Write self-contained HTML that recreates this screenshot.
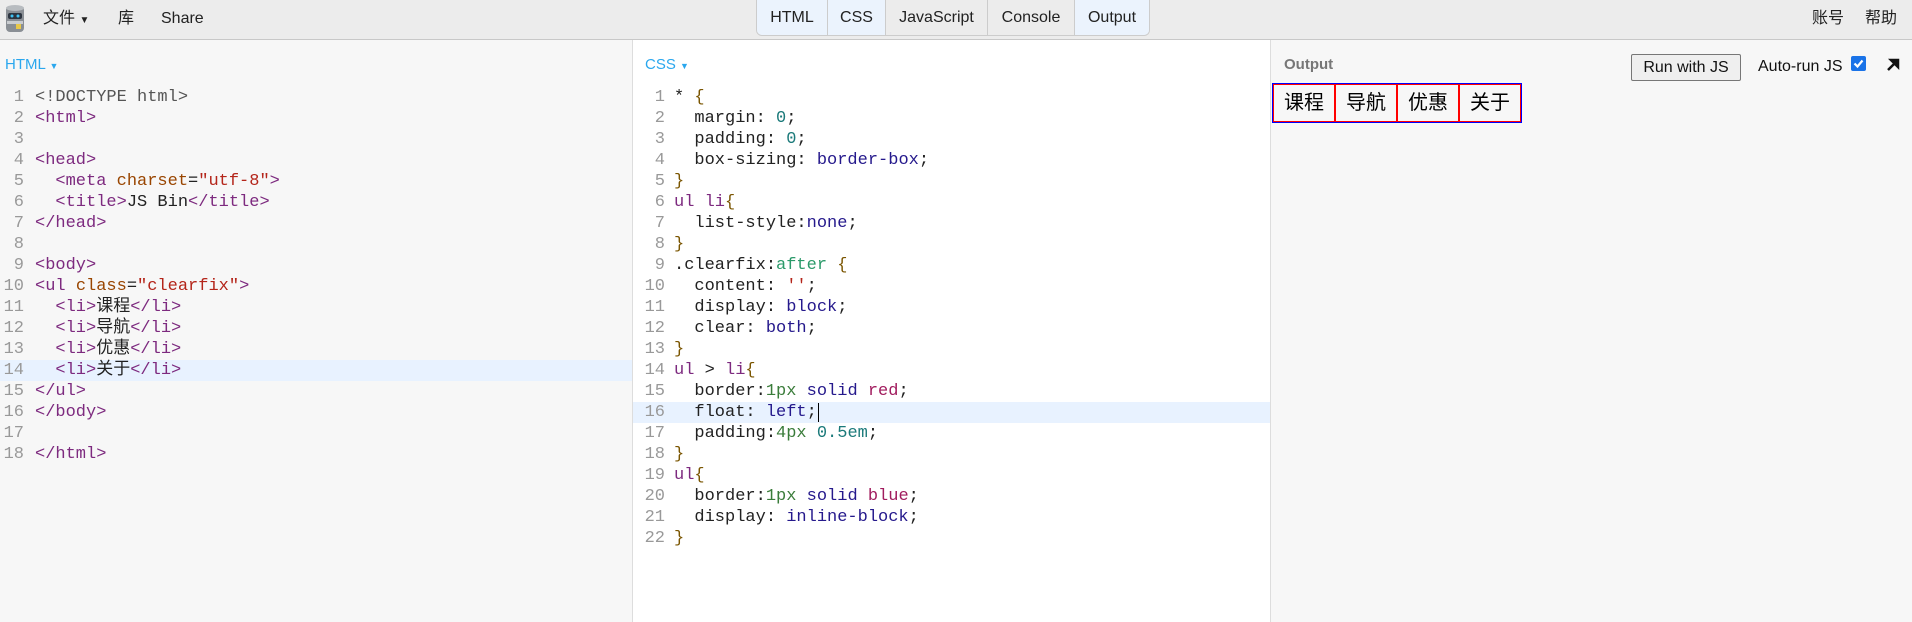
<!DOCTYPE html>
<html><head><meta charset="utf-8"><style>
*{margin:0;padding:0;box-sizing:border-box}
body{width:1912px;height:622px;overflow:hidden;background:#f7f7f7;font-family:"Liberation Sans","Noto Sans CJK SC",sans-serif;position:relative}
.top{position:absolute;left:0;top:0;width:1912px;height:40px;background:#ececec;border-bottom:1px solid #c8c8c8}
.menu{position:absolute;top:0;height:38px;line-height:38px;font-size:16px;color:#222}
.tabs{position:absolute;left:756px;top:0;height:36px;display:flex;border:1px solid #ccc;border-top:none;border-radius:0 0 6px 6px;overflow:hidden}
.tabs div{height:35px;line-height:36px;font-size:16px;color:#222;text-align:center;border-left:1px solid #ccc}
.tabs div:first-child{border-left:none}
.on{background:#ebf3fd}.off{background:#ececec}
.pane{position:absolute;top:40px;height:582px}
.lbl{position:absolute;top:56px;font-size:15px;color:#2aa7ee}
pre{position:absolute;font-family:"Liberation Mono","Noto Sans CJK SC",monospace;font-size:17px;line-height:21px;margin:0}
.ln{color:#999;text-align:right}
.t{color:#7d2a7f}.a{color:#994500}.s{color:#b4251a}.n{color:#1b7a7a}.v{color:#25198c}.r{color:#a11c5e}.g{color:#2b9a6a}.b{color:#7a5500}.k{color:#222}.q{color:#3a7c3a}
.hl{position:absolute;height:21px;background:#e8f2ff}
</style></head><body>
<div class="top"></div>
<svg style="position:absolute;left:4px;top:4px" width="22" height="30" viewBox="0 0 22 30"><rect x="2" y="2" width="18" height="26" rx="4" fill="#8a8f95"/><ellipse cx="11" cy="4" rx="9" ry="3" fill="#b8bcc0"/><rect x="4" y="9" width="14" height="6" rx="2" fill="#2c3540"/><circle cx="8" cy="12" r="1.5" fill="#3fc4f5"/><circle cx="14" cy="12" r="1.5" fill="#3fc4f5"/><rect x="3" y="17" width="16" height="3" fill="#c9ccd0"/><rect x="12" y="20" width="5" height="5" fill="#e8c84a"/></svg>
<div class="menu" style="left:43px">文件 <span style="font-size:10px">▼</span></div>
<div class="menu" style="left:118px">库</div>
<div class="menu" style="left:161px">Share</div>
<div class="menu" style="left:1812px">账号</div>
<div class="menu" style="left:1865px">帮助</div>
<div class="tabs"><div class="on" style="width:70px">HTML</div><div class="on" style="width:58px">CSS</div><div class="off" style="width:102px">JavaScript</div><div class="off" style="width:87px">Console</div><div class="on" style="width:75px">Output</div></div>

<div class="pane" style="left:0;width:632px;background:#f7f7f7"></div>
<div class="pane" style="left:632px;width:638px;background:#fff;border-left:1px solid #ddd"></div>
<div class="pane" style="left:1270px;width:642px;background:#f7f7f7;border-left:1px solid #ddd"></div>

<div class="lbl" style="left:5px">HTML <span style="font-size:9px">▼</span></div>
<div class="lbl" style="left:645px">CSS <span style="font-size:9px">▼</span></div>

<div class="hl" style="left:0;top:360px;width:632px"></div>
<div class="hl" style="left:633px;top:402px;width:637px"></div>

<pre class="ln" style="left:0;top:87px;width:24px">1
2
3
4
5
6
7
8
9
10
11
12
13
14
15
16
17
18</pre>
<pre style="left:35px;top:87px;color:#222"><span style="color:#555">&lt;!DOCTYPE html&gt;</span>
<span class="t">&lt;html&gt;</span>

<span class="t">&lt;head&gt;</span>
  <span class="t">&lt;meta</span> <span class="a">charset</span>=<span class="s">"utf-8"</span><span class="t">&gt;</span>
  <span class="t">&lt;title&gt;</span>JS Bin<span class="t">&lt;/title&gt;</span>
<span class="t">&lt;/head&gt;</span>

<span class="t">&lt;body&gt;</span>
<span class="t">&lt;ul</span> <span class="a">class</span>=<span class="s">"clearfix"</span><span class="t">&gt;</span>
  <span class="t">&lt;li&gt;</span>课程<span class="t">&lt;/li&gt;</span>
  <span class="t">&lt;li&gt;</span>导航<span class="t">&lt;/li&gt;</span>
  <span class="t">&lt;li&gt;</span>优惠<span class="t">&lt;/li&gt;</span>
  <span class="t">&lt;li&gt;</span>关于<span class="t">&lt;/li&gt;</span>
<span class="t">&lt;/ul&gt;</span>
<span class="t">&lt;/body&gt;</span>

<span class="t">&lt;/html&gt;</span></pre>

<pre class="ln" style="left:633px;top:87px;width:32px">1
2
3
4
5
6
7
8
9
10
11
12
13
14
15
16
17
18
19
20
21
22</pre>
<pre style="left:674px;top:87px;color:#222">* <span class="b">{</span>
  margin: <span class="n">0</span>;
  padding: <span class="n">0</span>;
  box-sizing: <span class="v">border-box</span>;
<span class="b">}</span>
<span class="t">ul li</span><span class="b">{</span>
  list-style:<span class="v">none</span>;
<span class="b">}</span>
.clearfix:<span class="g">after</span> <span class="b">{</span>
  content: <span class="s">''</span>;
  display: <span class="v">block</span>;
  clear: <span class="v">both</span>;
<span class="b">}</span>
<span class="t">ul</span> &gt; <span class="t">li</span><span class="b">{</span>
  border:<span class="q">1px</span> <span class="v">solid</span> <span class="r">red</span>;
  float: <span class="v">left</span>;<span style="border-left:1px solid #000;margin-left:1px"></span>
  padding:<span class="q">4px</span> <span class="n">0.5em</span>;
<span class="b">}</span>
<span class="t">ul</span><span class="b">{</span>
  border:<span class="q">1px</span> <span class="v">solid</span> <span class="r">blue</span>;
  display: <span class="v">inline-block</span>;
<span class="b">}</span></pre>

<div style="position:absolute;left:1284px;top:56px;font-size:15px;font-weight:bold;color:#777">Output</div>
<div style="position:absolute;left:1631px;top:54px;width:110px;height:27px;border:1px solid #777;border-radius:2px;background:#efefef;font-size:16px;line-height:25px;text-align:center;color:#111">Run with JS</div>
<div style="position:absolute;left:1758px;top:58px;font-size:16px;color:#111">Auto-run JS</div>
<div style="position:absolute;left:1851px;top:56px;width:15px;height:15px;background:#1a73e8;border-radius:2px"><svg width="15" height="15" viewBox="0 0 15 15"><path d="M3.5 7.5l3 3 5-6" stroke="#fff" stroke-width="2.2" fill="none"/></svg></div>
<svg style="position:absolute;left:1886px;top:58px" width="14" height="14" viewBox="0 0 14 14"><path d="M2 12L11 3M5 2h7v7z" stroke="#111" stroke-width="2.5" fill="#111"/></svg>

<div style="position:absolute;left:1272px;top:83px;border:1px solid blue;display:flex;font-size:20px;color:#000">
<div style="border:1px solid red;padding:5px 10px;line-height:26px">课程</div>
<div style="border:1px solid red;padding:5px 10px;line-height:26px">导航</div>
<div style="border:1px solid red;padding:5px 10px;line-height:26px">优惠</div>
<div style="border:1px solid red;padding:5px 10px;line-height:26px">关于</div>
</div>
</body></html>
